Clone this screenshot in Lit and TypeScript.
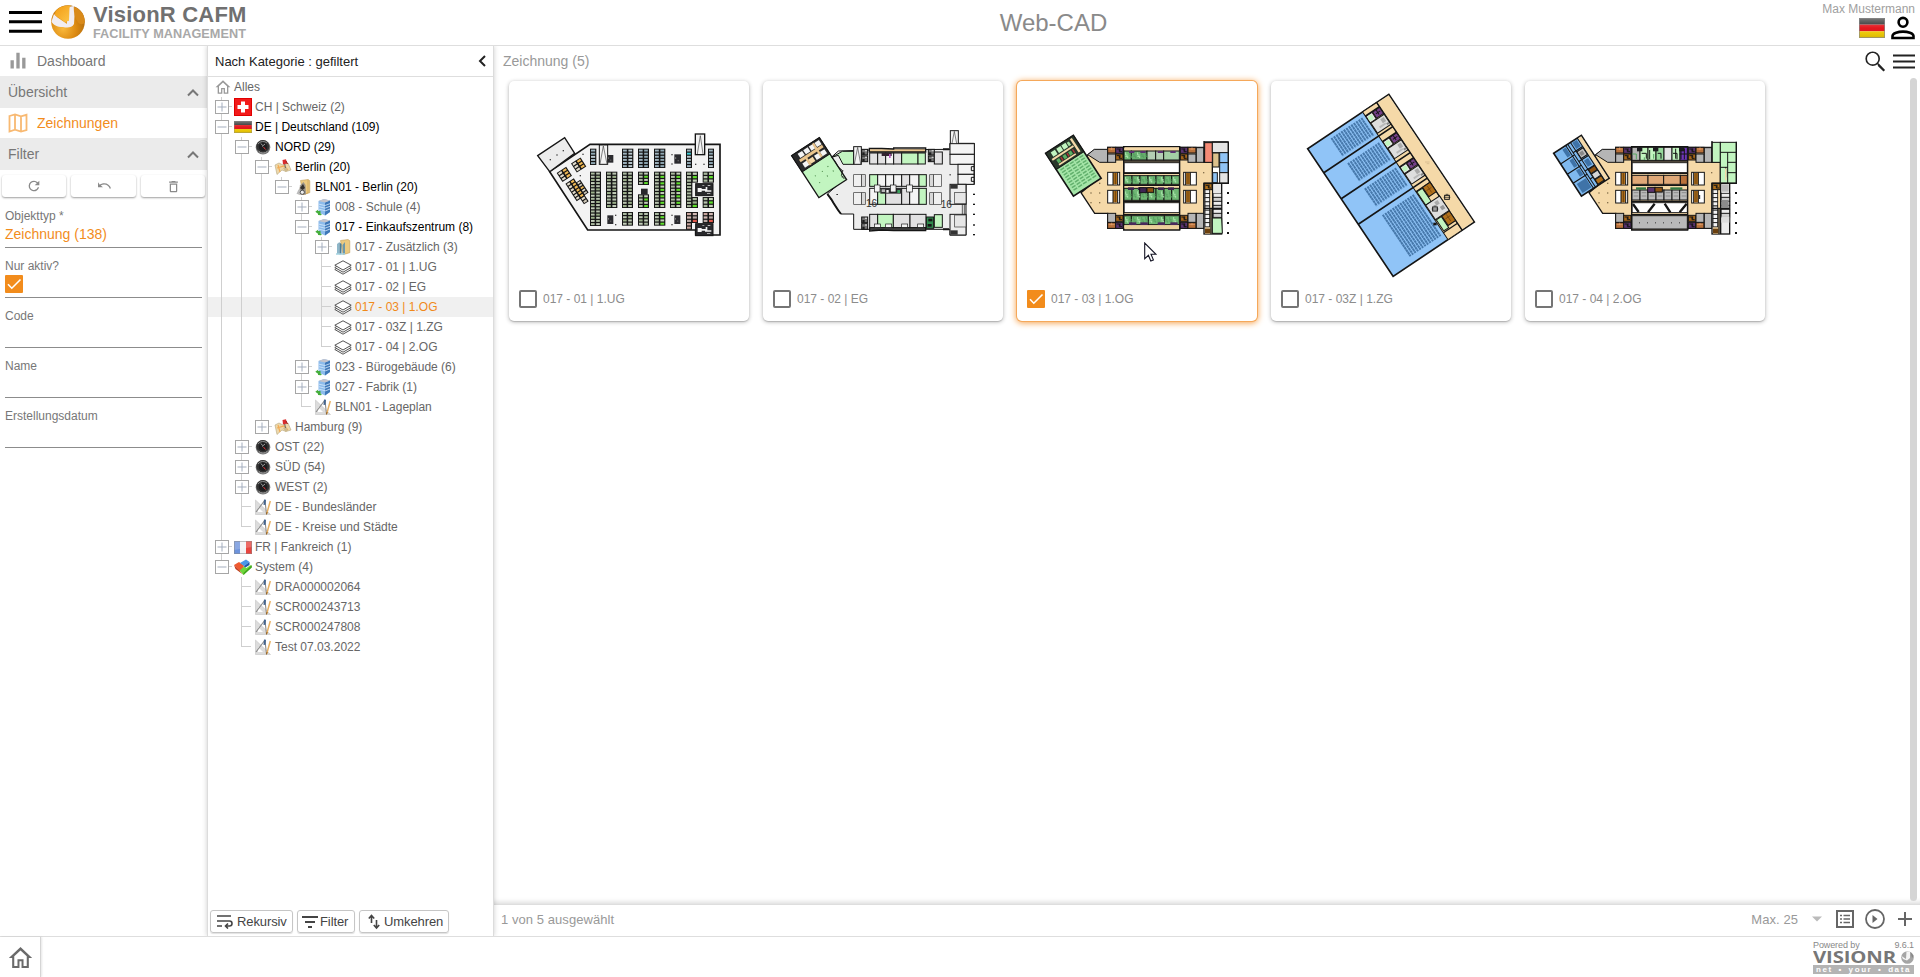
import { LitElement, html, svg, css, nothing } from "lit";
import { customElement, property } from "lit/decorators.js";

type Shape = unknown;

const BK = "#151515";
const TAN = "#f5d9a8";
const GREY = "#b5b5b5";
const GREEN = "#c2f5c0";

/* ---------- drawing helpers ---------- */
const box = (x: number, y: number, w: number, h: number, fill = "none", stroke = BK, sw = 3): Shape =>
  svg`<rect x=${x} y=${y} width=${w} height=${h} fill=${fill} stroke=${stroke} stroke-width=${sw}></rect>`;
const fillBox = (x: number, y: number, w: number, h: number, fill: string): Shape => box(x, y, w, h, fill, "none", 0);
const poly = (points: string, fill = "none", sw = 4): Shape =>
  svg`<polygon points=${points} fill=${fill} stroke=${BK} stroke-width=${sw}></polygon>`;
const path = (d: string, sw = 3, stroke = BK): Shape =>
  svg`<path d=${d} fill="none" stroke=${stroke} stroke-width=${sw}></path>`;
const range = (n: number): number[] => Array.from({ length: n }, (_, i) => i);

function stalls(x: number, y: number, w: number, h: number, colors: string[]): Shape {
  const cols = w > 24 ? 2 : 1;
  const rows = Math.max(2, Math.round(h / 9.5));
  const cw = w / cols;
  const rh = h / rows;
  return svg`${fillBox(x - 1, y - 1, w + 2, h + 2, BK)}
    ${range(rows * cols).map((i) => {
      const c = i % cols;
      const r = Math.floor(i / cols);
      return fillBox(x + c * cw + 2, y + r * rh + 1.8, cw - 4.5, rh - 3.6, colors[(i * 7 + r) % colors.length]);
    })}
    ${cols === 2 ? path(`M${x + w / 2} ${y}V${y + h}`, 2) : nothing}`;
}

function cells(x: number, y: number, widths: number[], h: number, fills: string[]): Shape {
  let cx = x;
  return widths.map((w, i) => {
    const s = box(cx, y, w, h, fills[i % fills.length]);
    cx += w;
    return s;
  });
}

const darkBlock = (x: number, y: number, w: number, h: number): Shape => svg`
  ${fillBox(x, y, w, h, "#2b2b2f")}${fillBox(x + w * 0.15, y + h * 0.3, w * 0.12, h * 0.2, "#999")}
  ${fillBox(x + w * 0.5, y + h * 0.6, w * 0.15, h * 0.15, "#777")}`;
const core = (x: number, y: number): Shape => svg`
  ${box(x, y, 52, 36, "#29292c")}
  <path d=${`M${x + 6} ${y + 13}h12v3h12v-6h5v10h12v4h-19v-3h-10v4h-12z`} fill="#f4f4f4"></path>
  ${fillBox(x + 20, y + 4, 6, 3, "#999")}${fillBox(x + 36, y + 4, 8, 3, "#bbb")}${fillBox(x + 34, y + 28, 10, 3, "#aaa")}`;
const dots = (): Shape => [369, 399, 429, 459, 489].map((y) => fillBox(660, y - 3, 6, 6, BK));

/* ---------- floor plans ---------- */
function planUG(): Shape {
  const g = ["#a9b99e", "#c4cfba", "#9bb08a", "#b9c4b0"];
  const g2 = [...g, "#5fe02c", "#a9b99e"];
  const b = ["#9fb4bf", "#bccbd2", "#8fa8b4"];
  const b2 = [...b, "#3fd0d8", "#bccbd2"];
  const o = ["#e3dccb", "#f0b955", "#cfc8b8"];
  const r = ["#c9a59d", "#e0574a", "#b9a9a4", "#d3bab4"];
  return svg`
    ${poly("270,223 660,223 660,495 587,495 587,480 263,480 149,305", "#f3f3f3", 5)}
    ${poly("113,257 194,203 224,250 149,305", "#ececec", 4)}
    ${[[151, 269], [171, 255], [190, 242], [249, 253], [241, 317], [587, 283], [612, 283], [516, 254], [516, 282], [347, 436], [347, 464], [516, 436], [516, 464]].map(([x, y]) => fillBox(x - 2, y - 2, 4, 4, "#444"))}
    ${stalls(271, 237, 17, 47, b)}${stalls(367, 237, 32, 56, b)}${stalls(415, 237, 31, 56, b2)}
    ${stalls(463, 237, 32, 56, b2)}${stalls(559, 237, 16, 56, b2)}${stalls(625, 237, 16, 56, b)}
    ${stalls(271, 306, 31, 161, g)}${stalls(319, 306, 32, 107, g)}${stalls(367, 306, 31, 107, g)}
    ${stalls(415, 306, 31, 38, g2)}${stalls(415, 374, 31, 39, g2)}${stalls(463, 306, 32, 107, g2)}
    ${stalls(511, 306, 32, 107, g2)}${stalls(559, 306, 34, 31, g2)}${stalls(559, 337, 17, 76, g)}
    ${stalls(576, 382, 17, 31, g2)}${stalls(609, 306, 32, 31, g2)}${stalls(609, 382, 32, 31, g2)}
    ${stalls(367, 427, 31, 39, g)}${stalls(415, 427, 31, 39, g)}${stalls(463, 427, 32, 39, g2)}
    ${stalls(559, 427, 34, 31, r)}${stalls(559, 458, 16, 20, r)}${stalls(609, 427, 32, 31, r)}
    <g transform="translate(193 313) rotate(-33)">${stalls(-16, -15, 32, 30, o)}</g>
    <g transform="translate(236 285) rotate(-33)">${stalls(-16, -15, 32, 30, o)}</g>
    <g transform="translate(214 343) rotate(-33)">${stalls(-13, -10, 28, 60, o)}${stalls(15, 4, 14, 44, o)}${stalls(0, 50, 15, 20, o)}</g>
    ${darkBlock(523, 253, 20, 28)}${darkBlock(322, 255, 18, 23)}${darkBlock(322, 436, 18, 26)}
    ${darkBlock(523, 436, 18, 26)}${fillBox(423, 356, 20, 18, "#29292c")}
    ${core(587, 341)}${core(587, 461)}
    ${box(586, 192, 28, 62, "#f3f3f3", BK, 4)}${path("M592 252L601 197L609 252", 2, "#444")}
    ${box(298, 225, 25, 58, "#f3f3f3")}${path("M300 282L310 228L321 282", 2, "#444")}`;
}

function planEG(): Shape {
  const w = "#f4f4f4";
  const l = "#e2e1e2";
  const small = (x: number, y: number): Shape => svg`
    ${box(x, y, 18, 17, "#777")}${fillBox(x + 2, y + 9, 7, 8, "#1e1e1e")}${fillBox(x + 10, y + 2, 6, 4, "#ccc")}`;
  return svg`
    ${poly("229,262 250,243 343,240 585,238 585,220 658,220 658,343 633,343 633,495 585,495 585,478 296,478 296,432 258,432 217,372 268,327", "#ededed", 3)}
    ${poly("230,262 262,244 296,244 296,283 264,283 250,256", GREEN, 3)}
    <g transform="translate(110 257) rotate(-33)">
      ${box(0, 0, 99, 150, GREEN, BK, 4)}${box(0, 0, 99, 58, "#29292a", BK, 3)}
      ${range(4).map((i) => fillBox(18 + i * 20, 5, 16, 15, w))}
      ${range(4).map((i) => fillBox(14 + i * 21, 37, 16, 15, i === 1 ? TAN : w))}
      ${fillBox(12, 22, 82, 9, "#eac58d")}${fillBox(70, 4, 7, 48, "#eac58d")}${fillBox(29, 28, 7, 26, "#eac58d")}
      ${[[25, 88], [50, 88], [72, 85], [25, 112], [55, 108], [78, 105]].map(([x, y]) => fillBox(x, y, 3, 3, "#3d7c3a"))}
    </g>
    ${path("M217 372L229 388L236 400L249 420L258 432", 6)}
    ${path("M229 262l10 10 10 18 14 12-4 14 9 11", 2.5)}
    ${box(296, 230, 23, 53, w)}${path("M298 282L308 232L317 282", 2, "#444")}
    ${box(586, 182, 24, 56, w)}${path("M588 236L598 184L608 236", 2, "#444")}
    ${cells(344, 249, [24, 24, 24, 24, 49, 22], 33, [l, l, w, l, GREEN, GREEN])}
    ${fillBox(344, 238, 168, 8, "#eac58d")}${path("M343 235H380L416 237V234H512V246H343Z", 4)}
    ${fillBox(380, 249, 30, 9, "#33232f")}${fillBox(402, 252, 5, 12, "#b75bc0")}
    ${cells(344, 314, [24, 24, 24, 24, 24, 28, 22], 35, [GREEN, w, w, w, l, w, GREEN])}
    ${cells(344, 355, [24, 24, 48, 24, 28, 22], 48, [w, GREEN, l, l, w, GREEN])}
    ${fillBox(376, 354, 64, 17, "#2f2f31")}${fillBox(380, 358, 10, 8, "#bbb")}${fillBox(394, 360, 7, 8, w)}${fillBox(410, 357, 8, 6, w)}${fillBox(427, 360, 8, 9, "#3aa05b")}
    ${[358, 406, 455].map((x) => box(x, 345, 17, 21, w, BK, 2))}
    ${cells(344, 433, [24, 47, 50, 48], 40, [l, GREEN, l, l])}
    ${path("M344 474H512V482H416L380 480L344 483Z", 4)}
    ${[358, 392, 440, 488].map((x) => box(x, 462, 18, 10, w, BK, 2))}
    ${small(320, 238)}${small(320, 258)}${small(520, 238)}${small(520, 258)}${small(320, 441)}${small(320, 461)}
    ${box(514, 441, 22, 34, "#2f8a4c")}${fillBox(520, 446, 12, 8, BK)}${fillBox(518, 462, 12, 8, BK)}
    ${box(538, 434, 24, 38, GREEN)}${box(538, 246, 24, 36, l)}
    ${[314, 368].map((y) => svg`${box(296, y, 24, 35, "#f0f0f0", "#333", 2)}${box(320, y, 11, 35, "#d8d8d8", "#333", 2)}${box(524, y, 12, 35, "#d8d8d8", "#333", 2)}${box(536, y, 23, 35, "#f0f0f0", "#333", 2)}`)}
    ${cells(585, 221, [73], 32, [w])}${cells(585, 253, [73], 30, [w])}
    ${box(609, 283, 48, 30, w)}${box(609, 313, 48, 30, w)}${path("M657 290h-8v12h8M657 322h-8v12h8")}
    ${box(585, 343, 48, 60, "#ededed")}${box(599, 367, 34, 34, "#e6e6e6", "#333", 2)}${fillBox(586, 344, 22, 12, "#333")}
    ${box(585, 433, 48, 62, "#ededed")}${box(599, 435, 34, 36, "#e6e6e6", "#333", 2)}${fillBox(586, 481, 22, 13, "#333")}
    ${path("M628 403v30M622 403v30", 2)}${path("M564 238h18M564 478h18", 6)}
    <text x="333" y="411" font-size="30" font-family="Liberation Sans, sans-serif" fill="#333">16</text>
    <text x="557" y="414" font-size="30" font-family="Liberation Sans, sans-serif" fill="#333">16</text>
    ${[373, 403, 433, 465, 494].map((y) => fillBox(654, y - 2, 6, 4, BK))}
    ${[[262, 302], [262, 320], [246, 373], [585, 314]].map(([x, y]) => fillBox(x - 2, y - 1, 5, 3, "#333"))}`;
}

/* Shell shared by both upper storeys. */
function upperShell(): Shape {
  const br = "#b9713a";
  const utility = (x: number, y: number, fill: string): Shape => svg`
    ${box(x, y, 22, 18, fill)}${path(`M${x + 3} ${y + 5}h8v8h8M${x + 13} ${y + 3}v8`, 3)}`;
  const wood = (x: number, y: number): Shape => svg`${box(x, y, 24, 17, br)}${path(`M${x + 3} ${y + 5}h18M${x + 12} ${y}v8`, 2, "#e8a672")}`;
  return svg`
    ${poly("238,258 262,240 302,240 302,232 350,232 350,230 518,230 518,232 591,232 591,277 616,277 616,340 591,340 591,475 518,475 518,480 350,480 350,475 302,475 302,430 263,430 222,368 278,322", TAN, 4)}
    ${poly("242,254 262,238 302,238 302,277 278,277", GREY, 3)}
    ${box(302, 252, 24, 25, GREY)}${wood(302, 232)}${utility(326, 232, "#5b3370")}${utility(326, 252, "#a5651a")}
    ${utility(520, 232, "#5b3370")}${utility(520, 252, "#a5651a")}${wood(543, 232)}
    ${box(543, 252, 24, 25, GREY)}${box(568, 233, 23, 44, GREY)}
    ${box(302, 430, 24, 27, GREY)}${wood(302, 458)}${utility(326, 436, "#a5651a")}${utility(326, 457, "#5b3370")}
    ${utility(520, 436, "#a5651a")}${utility(520, 457, "#5b3370")}${wood(543, 458)}
    ${box(543, 430, 24, 27, GREY)}${box(568, 430, 23, 45, GREY)}
    ${[307, 361].map((y) => svg`
      ${box(302, y, 36, 38, "#fff")}${fillBox(318, y + 2, 13, 34, "#b0701c")}${path(`M318 ${y}v38M332 ${y}v38`, 3)}${path(`M325 ${y + 2}v34`, 3, "#6e430d")}
      ${box(530, y, 38, 38, "#fff")}${fillBox(537, y + 2, 13, 34, "#b0701c")}${path(`M536 ${y}v38M550 ${y}v38`, 3)}${path(`M543 ${y + 2}v34`, 3, "#6e430d")}`)}
    ${box(351, 278, 166, 30, "#fff")}${box(351, 398, 166, 30, "#fff")}
    ${path("M350 230V480M518 230V480M350 273H518M350 310H518M350 346H518M350 394H518M350 434H518", 4)}
    ${[[252, 369], [278, 369], [252, 398], [278, 398], [278, 340], [590, 308]].map(([x, y]) => fillBox(x - 2, y - 2, 4, 4, "#85714d"))}
    ${box(591, 340, 53, 152, "#ececec", BK, 4)}${fillBox(594, 343, 22, 148, TAN)}
    ${range(9).map((i) => box(594, 358 + i * 12.5, 14, 12.5, "#f2f2f2", BK, 2.5))}
    ${utility(593, 341, "#b0701c")}${fillBox(594, 476, 16, 14, "#6b400e")}
    ${range(6).map((i) => box(618, 370 + i * 12, 26, 12, i % 2 ? "#cfcfcf" : "#ececec", BK, 2.5))}
    ${path("M617 340V492M591 415H644M612 415V492", 4)}
    ${dots()}`;
}

function planOG1(): Shape {
  const d = "#6fb874";
  const furn = (x: number, y: number, n: number, h: number): Shape =>
    range(n).map((i) => path(`M${x + 5 + i * 12} ${y + 4}v${h * 0.3}h6M${x + 4 + i * 12} ${y + h * 0.6}h7v5`, 2.6, i % 3 ? "#549d5e" : "#b5ecb6"));
  return svg`${upperShell()}
    ${cells(351, 243, [22, 47, 26, 24, 47], 27, [d, "#67ae6e", "#b4cfb4", "#b4cfb4", "#a4d0a5"])}${furn(351, 243, 6, 27)}
    ${cells(351, 317, [24, 24, 24, 24, 24, 23, 23], 26, [d])}${furn(351, 317, 13, 26)}
    ${cells(351, 355, [24, 24, 24, 24, 24, 23, 23], 36, [d])}${furn(351, 360, 13, 30)}
    ${cells(351, 437, [22, 51, 48, 45], 27, [d])}${furn(351, 437, 13, 27)}
    ${fillBox(352, 466, 164, 10, "#ecd09b")}${fillBox(352, 233, 164, 7, TAN)}
    ${[366, 400, 452, 490].map((x) => svg`${fillBox(x, 243, 16, 6, "#5b3370")}${fillBox(x, 457, 22, 8, "#4a2a5c")}`)}
    ${range(5).map((i) => fillBox(363 + i * 30, 352, 18, 8, "#3e2552"))}
    ${box(398, 353, 20, 15, "#3e2552")}${box(420, 353, 20, 14, "#8d5213")}
    ${box(593, 218, 23, 59, "#f58a75")}${box(616, 216, 48, 32, "#e4e4e4")}${box(617, 249, 19, 42, "#dcc18c")}
    ${box(638, 248, 26, 30, "#8fc3f5")}${box(638, 278, 26, 30, "#8fc3f5")}${box(617, 308, 14, 30, "#8fc3f5")}
    ${box(638, 308, 26, 31, "#e4e4e4")}${path("M591 213V278M664 215V340H591M591 216H664", 4)}
    ${fillBox(619, 343, 22, 27, "#e8e8e8")}${poly("616,444 644,444 646,490 616,490", GREEN, 3)}
    <g transform="translate(116 250) rotate(-33)">
      ${box(0, 0, 99, 153, "#a5e5a8", BK, 5)}${box(0, 0, 99, 58, "#29372a", BK, 3)}
      ${[14, 34, 52].map((x) => fillBox(x, 6, 15, 15, GREEN))}${fillBox(70, 8, 8, 12, "#a5e0a4")}
      ${fillBox(6, 24, 76, 6, TAN)}${fillBox(84, 4, 7, 48, TAN)}${fillBox(15, 48, 60, 5, TAN)}
      ${[16, 38, 58].map((x) => svg`${fillBox(x, 34, 10, 12, "#5ab062")}${fillBox(x + 14, 34, 4, 12, "#b3343a")}`)}
      ${range(5).map((c) => range(9).map((r) => fillBox(10 + c * 17, 64 + r * 9, 13, 4.5, "#62b06d")))}
    </g>`;
}

function planOG2(): Shape {
  return svg`${upperShell()}
    ${cells(351, 232, [24, 24, 24, 24, 24, 24, 22], 39, [GREY, GREEN, GREEN, "#97d99c", "#e4e4e4", GREEN, "#6e35b8"])}
    ${[366, 414, 492].map((x) => fillBox(x, 232, 16, 12, "#1c1c20"))}
    ${path("M380 250h14v16M404 240v28M428 250h10v16M474 250h12v18M482 236v30M498 240v28M508 236v32M494 252h22", 3)}
    ${path("M352 252h12v16M388 262v8M416 252v14", 3, "#58a864")}
    ${cells(351, 316, [48, 47, 50, 21], 27, ["#dfa878", "#dfa878", "#dfa878", "#b9713a"])}
    ${cells(351, 360, [24, 24, 24, 24, 24, 23, 23], 30, ["#bababa"])}
    ${range(7).map((i) => path(`M${356 + i * 24} 368h14M${356 + i * 24} 378h14`, 2, "#777"))}
    ${fillBox(363, 352, 30, 7, "#357a46")}${box(398, 352, 22, 15, "#5b3370")}${box(420, 352, 22, 14, "#8d5213")}${fillBox(466, 352, 36, 7, "#357a46")}
    ${path("M354 402L371 426M419 401L399 427M449 401L466 427M515 401L494 427", 7)}
    ${box(351, 437, 166, 40, "#b9b9b9")}${range(6).map((i) => fillBox(372 + i * 24, 457, 3, 3, "#333"))}
    ${path("M554 375v12", 3)}
    ${box(591, 217, 25, 60, GREEN)}${box(616, 217, 48, 122, GREEN)}${path("M616 247H664M638 247V339M638 277H664M638 308H664M616 292H638M632 292V322", 3)}
    ${fillBox(630, 295, 4, 36, TAN)}${path("M591 213V278M664 215V340H591", 4)}
    ${fillBox(619, 343, 22, 22, "#bbb")}${fillBox(619, 390, 22, 24, "#8b8b8b")}${fillBox(619, 440, 24, 18, "#ddd")}
    <g transform="translate(116 250) rotate(-33)">
      ${box(0, 0, 99, 153, "#7fb9ef", BK, 5)}
      ${fillBox(86, 2, 11, 149, TAN)}${path("M84 0V153M50 0V153M43 0V153M60 0V153", 3)}${path("M0 38H50M0 75H50M0 107H50M50 30H84M50 62H84M50 96H84M50 124H84", 3.5)}
      ${[[28, 5, 12, 28], [28, 44, 12, 26], [28, 80, 12, 22], [8, 115, 32, 32], [64, 4, 16, 22]].map(([x, y, w, h]) => fillBox(x, y, w, h, "#3f73a8"))}
      ${box(61, 34, 22, 24, "#c2c2c2")}${fillBox(65, 40, 12, 12, "#888")}${fillBox(64, 68, 15, 22, "#3f73a8")}
      ${box(61, 98, 22, 14, "#8d5213")}${box(61, 114, 22, 18, "#d5d5d5")}${box(61, 134, 22, 16, "#b0701c")}
    </g>`;
}

function planZG(): Shape {
  const seats = (y: number, h: number): Shape =>
    range(13).map((i) => svg`<path d=${`M${77 + i * 9} ${y}v${h}`} stroke="#4678ab" stroke-width="6" stroke-dasharray="8 1"></path>`);
  return svg`
    <g transform="translate(143 236) rotate(-33.8)">
      ${box(0, 0, 293, 461, "#90c4f7", BK, 5)}
      ${seats(13, 64)}${seats(103, 64)}${seats(194, 64)}${seats(290, 150)}
      ${box(198, 0, 51, 461, TAN, BK, 3)}${fillBox(250, 2, 41, 457, TAN)}${path("M249 0V461", 4)}
      ${path("M0 87H249M0 181H249M0 273H249", 5)}
      ${[0, 92, 184].map((y) => svg`
        ${path(`M198 ${y + 15}H249`, 4)}${box(200, y + 42, 48, 36, "#dedede")}
        ${fillBox(230, y + 48, 12, 14, "#aaa")}${fillBox(215, y + 64, 22, 6, "#b9b9b9")}${fillBox(238, y + 68, 8, 6, "#888")}
        ${box(199, y + 17, 22, 23, "#e8e8e8")}<circle cx="209" cy=${y + 28} r="8" fill=${GREEN}></circle>
        ${box(223, y + 17, 25, 22, "#76418a")}${path(`M228 ${y + 27}h16M235 ${y + 18}v16`, 3)}`)}
      ${path("M198 288H249", 4)}${box(200, 290, 20, 48, GREEN)}${box(222, 288, 27, 34, "#b0701c")}${path("M226 303h18M236 292v24", 2, "#6b400e")}
      ${box(200, 338, 50, 52, "#dedede")}${fillBox(226, 345, 12, 12, "#aaa")}${fillBox(232, 366, 12, 12, "#999")}
      ${box(202, 392, 18, 40, GREEN)}${box(222, 392, 27, 34, "#b0701c")}${path("M226 405h18M236 395v24", 2, "#6b400e")}${path("M198 436H249", 4)}
    </g>
    ${[[561, 382], [525, 417]].map(([x, y]) => svg`${box(x - 7, y - 6, 14, 12, "none", BK, 3)}${path(`M${x - 10} ${y}h20M${x - 4} ${y - 9}h8`, 2)}`)}
    ${fillBox(520, 458, 10, 8, BK)}${path("M495 276h14M500 281h8", 2, "#cdb488")}`;
}

/* ---------- small glyphs ---------- */
const FILLED: Record<string, string> = {
  refresh: "M17.65 6.35A7.958 7.958 0 0 0 12 4a8 8 0 1 0 7.73 10h-2.08A6 6 0 1 1 12 6c1.66 0 3.14.69 4.22 1.78L13 11h7V4z",
  undo: "M3 6.5V14h7.5L7.2 11.4C8.600 10.3 10.400 9.700 12.300 9.700c4 0 7.300 2.500 8.300 6.300l1.900-.6C21.200 11 17.200 7.900 12.300 7.900c-2.500 0-4.800.8-6.600 2.200z",
  trash: "M6 19c0 1.1.9 2 2 2h8c1.100 0 2-.9 2-2V7H6v12zM8 9h8v10H8V9zm7.500-5l-1-1h-5l-1 1H5v2h14V4z",
  search: "M15.100 14.100l-.6-.5A6.400 6.400 0 0 0 16 9.500 6.500 6.500 0 1 0 9.500 16c1.600 0 3-.6 4.100-1.500l.5.600v.9l5 4.900L20.500 19.500l-4.900-5zM9.500 14.500C6.700 14.500 4.500 12.300 4.500 9.500S6.700 4.500 9.500 4.500 14.500 6.700 14.500 9.500 12.300 14.500 9.500 14.500z",
  home: "M12 2L0.800 12.400H4V22h7v-6.500h2V22h7v-9.600h3.200zM18 20.200h-3.100v-6.600H9.100v6.600H6v-9.400l6-5.600 6 5.600z",
  bars: "M3 11h4v10H3zM10 2h4v19h-4zM17 8h4v13h-4z",
};

const glyph = (name: string, size: number) =>
  html`<svg width=${size} height=${size} viewBox="0 0 24 24" fill="currentColor"><path d=${FILLED[name]}></path></svg>`;

const lines = (d: string, w: number, h: number, sw = 2) =>
  html`<svg width=${w} height=${h} viewBox=${`0 0 ${w} ${h}`} fill="none" stroke="currentColor" stroke-width=${sw}><path d=${d}></path></svg>`;

const flag = (w: number, h: number) => html`
  <svg width=${w} height=${h} viewBox="0 0 18 12" preserveAspectRatio="none">
    <defs><linearGradient id="gl" x2="0" y2="1"><stop offset="0" stop-color="#fff" stop-opacity=".4"></stop><stop offset=".5" stop-color="#fff" stop-opacity=".05"></stop><stop offset="1" stop-color="#000" stop-opacity=".12"></stop></linearGradient></defs>
    <path d="M0 0h18v4H0z" fill="#222"></path><path d="M0 4h18v4H0z" fill="#e30b12"></path><path d="M0 8h18v4H0z" fill="#f5cf00"></path>
    <path d="M0 0h18v12H0z" fill="url(#gl)"></path><path d="M.25.25h17.500v11.500H.25z" fill="none" stroke="#888" stroke-width=".5"></path>
  </svg>`;

function treeIcon(kind: string) {
  switch (kind) {
    case "home":
      return html`<svg width="16" height="16" viewBox="0 0 24 24" fill="#999"><path d=${FILLED.home}></path></svg>`;
    case "ch":
      return html`<svg width="18" height="18" viewBox="0 0 18 18"><rect x=".5" y=".5" width="17" height="17" fill="#f21a1a" stroke="#e00000"></rect><path d="M7 3.500h4V7h3.500v4H11v3.500H7V11H3.500V7H7z" fill="#fff"></path></svg>`;
    case "de":
      return flag(18, 12);
    case "fr":
      return html`<svg width="18" height="13" viewBox="0 0 18 13"><path d="M0 0h6v13H0z" fill="#6d93dc"></path><path d="M6 0h6v13H6z" fill="#f3f3f5"></path><path d="M12 0h6v13h-6z" fill="#e8453f"></path><path d="M0 0h18v6L0 9z" fill="#fff" opacity=".2"></path><path d="M.5.5h17v12H.5z" fill="none" stroke="#888" stroke-opacity=".5"></path></svg>`;
    case "compass":
      return html`<svg width="16" height="16" viewBox="0 0 16 16"><circle cx="8" cy="8.300" r="7.300" fill="#777"></circle><circle cx="7.800" cy="7.600" r="6.500" fill="#333"></circle><circle cx="8" cy="7.800" r="4.300" fill="#1d1d1f"></circle><path d="M3 5a6 6 0 0 1 9-1" stroke="#888" fill="none"></path><path d="M7 7.500L10 5M6 4.500l1.500 2" stroke="#aaa" stroke-width=".9"></path><path d="M8.500 8l2 2.500" stroke="#d33" stroke-width="1"></path><path d="M3.500 12a6 6 0 0 0 9 0" stroke="#999" fill="none"></path></svg>`;
    case "map":
      return html`<svg width="18" height="16" viewBox="0 0 18 16"><path d="M1 6l4-2 4 2 5-2 3 7-5 1.500-4-1.500-5 4.500z" fill="#eed9ab" stroke="#b6a67e" stroke-width=".6"></path><path d="M4 6l2 7M3 9l7-2 4 4" stroke="#f2ab55" stroke-width="1.200" fill="none"></path><path d="M9 9l2.500 4 2.500-1.500-2-3.500z" fill="#cdbb90"></path><path d="M10.500 4l1 5" stroke="#666"></path><path d="M8.500 1l3.500-.8 1 4.300-4 1z" fill="#d92d2d"></path><path d="M12 2l1.500 3" stroke="#981515"></path></svg>`;
    case "site":
      return html`<svg width="16" height="16" viewBox="0 0 16 16"><path d="M5.500 1.500l7.500-1 1.800 1.200v12L8 15.700z" fill="#ecca80" stroke="#b8934a" stroke-width=".5"></path><path d="M13 .5v13.500L8 15.500" stroke="#cfa75c" stroke-width=".8" fill="none"></path><path d="M3.500 15.500L5 6.500 8.500 3l2 3 .5 9.500z" fill="#9b9489"></path><path d="M5 9l3-4 2 4-2.500 2z" fill="#33302e"></path><path d="M1.500 15l2-4.500 3 1v4z" fill="#bbb"></path><circle cx="7.300" cy="13.300" r="2.100" fill="#eee" stroke="#444" stroke-width=".9"></circle></svg>`;
    case "extra":
      return html`<svg width="16" height="16" viewBox="0 0 16 16"><path d="M5.500 1.500l7.500-1 1.800 1.200v12L8 15.700z" fill="#ecca80" stroke="#b8934a" stroke-width=".5"></path><path d="M2 15V5l2.500-2v12z" fill="#8fb7c9"></path><path d="M4.500 3.500L6.500 5v10l-2 .5z" fill="#4d7d96"></path><path d="M8 15L7.500 6 10 3v12z" fill="#6e98ab"></path><path d="M1 15h9" stroke="#a5d3e0" stroke-width="1.500"></path></svg>`;
    case "building":
      return html`<svg width="16" height="18" viewBox="0 0 16 18"><path d="M3.500 3L9 1l6 1.500V14l-5 3.500-6.500-3z" fill="#8dbcec"></path><path d="M10 4.500l5-2V14l-5 3.500z" fill="#3f78b8"></path><path d="M3.500 3L9 1l6 1.500-5 2z" fill="#c4c4cc"></path><path d="M4 6.200l6 1.300M4 8.700l6 1.500M4 11.200l6 1.500M10 7.500l5-1.800M10 10.200l5-1.900M10 13l5-2" stroke="#d6eafc" stroke-width=".8"></path><path d="M.3 13.800l2.700-2v1.300h2.500v2.300l1.300.8L6 17.300l-3-.3v-1.300z" fill="#46ad3c"></path></svg>`;
    case "layers":
      return html`<svg width="18" height="15" viewBox="0 0 18 15" fill="#fff" stroke="#555" stroke-width="1"><path d="M.8 9.500L9 5l8.200 4.500L9 14.200z"></path><path d="M.8 7.500L9 3l8.200 4.500L9 12.200z"></path><path d="M.8 5.200L9 .8l8.200 4.400L9 10z"></path></svg>`;
    case "drawing":
      return html`<svg width="16" height="16" viewBox="0 0 16 16"><path d="M.5 1v14.500h15z" fill="#dcdcdc" stroke="#c2c2c2" stroke-width=".6"></path><path d="M3 8v5h5z" fill="#fff"></path><path d="M10 1L1 13M10 2l1.500 13" stroke="#8b8b8b" stroke-width="1.100"></path><path d="M9 .5l2 .3-.5 5-2 .2z" fill="#43648e"></path><path d="M15.300 2l-3.500 12.500" stroke="#e8b060" stroke-width="1.500"></path><path d="M12 13l-.5 2.500" stroke="#8a5a20"></path></svg>`;
    default:
      return html`<svg width="18" height="16" viewBox="0 0 18 16"><path d="M0 6l5-3 5 3.500-1 4-3 2z" fill="#ee5a30"></path><path d="M0 6l5.500 5.500L9 15.500 1.500 10z" fill="#c23c20"></path><path d="M6 4L12 .5l3.500 2.500-5.500 4z" fill="#4a97e8"></path><path d="M10 7l5.500-4v3l-5 3z" fill="#1c59b0"></path><path d="M5.500 11.500l4.500-4 2.500 1.500 4-3 1.300 2-8.300 8z" fill="#6fd63c"></path><path d="M9.500 16v-2l8.300-8v2.500z" fill="#3fa51d"></path></svg>`;
  }
}

/* ---------- tree ---------- */
interface TreeRow {
  /** One character per column: "|" line, " " blank, "+"/"-" toggle, "p"/"m" last toggle, "T" tee, "L" corner. */
  cols: string;
  icon: string;
  label: string;
  strong?: boolean;
  active?: boolean;
}

const ROWS: TreeRow[] = [
  { cols: "", icon: "home", label: "Alles" },
  { cols: "+", icon: "ch", label: "CH | Schweiz (2)" },
  { cols: "-", icon: "de", label: "DE | Deutschland (109)", strong: true },
  { cols: "|-", icon: "compass", label: "NORD (29)", strong: true },
  { cols: "||-", icon: "map", label: "Berlin (20)", strong: true },
  { cols: "|||m", icon: "site", label: "BLN01 - Berlin (20)", strong: true },
  { cols: "||| +", icon: "building", label: "008 - Schule (4)" },
  { cols: "||| -", icon: "building", label: "017 - Einkaufszentrum (8)", strong: true },
  { cols: "||| |+", icon: "extra", label: "017 - Zusätzlich (3)" },
  { cols: "||| |T", icon: "layers", label: "017 - 01 | 1.UG" },
  { cols: "||| |T", icon: "layers", label: "017 - 02 | EG" },
  { cols: "||| |T", icon: "layers", label: "017 - 03 | 1.OG", active: true },
  { cols: "||| |T", icon: "layers", label: "017 - 03Z | 1.ZG" },
  { cols: "||| |L", icon: "layers", label: "017 - 04 | 2.OG" },
  { cols: "||| +", icon: "building", label: "023 - Bürogebäude (6)" },
  { cols: "||| +", icon: "building", label: "027 - Fabrik (1)" },
  { cols: "||| L", icon: "drawing", label: "BLN01 - Lageplan" },
  { cols: "||p", icon: "map", label: "Hamburg (9)" },
  { cols: "|+", icon: "compass", label: "OST (22)" },
  { cols: "|+", icon: "compass", label: "SÜD (54)" },
  { cols: "|+", icon: "compass", label: "WEST (2)" },
  { cols: "|T", icon: "drawing", label: "DE - Bundesländer" },
  { cols: "|L", icon: "drawing", label: "DE - Kreise und Städte" },
  { cols: "+", icon: "fr", label: "FR | Fankreich (1)" },
  { cols: "m", icon: "system", label: "System (4)" },
  { cols: " T", icon: "drawing", label: "DRA000002064" },
  { cols: " T", icon: "drawing", label: "SCR000243713" },
  { cols: " T", icon: "drawing", label: "SCR000247808" },
  { cols: " L", icon: "drawing", label: "Test 07.03.2022" },
];

@customElement("category-tree")
export class CategoryTree extends LitElement {
  static styles = css`
    :host { display: block; font: 12px "Liberation Sans", Arial, sans-serif; color: #666; }
    .row { display: flex; height: 20px; align-items: center; padding-left: 4px; white-space: pre; }
    .cell { width: 20px; height: 20px; flex: none; display: block; }
    .icon { width: 18px; height: 18px; margin: 0 3px 0 2px; display: flex; align-items: center; justify-content: center; flex: none; }
    .icon svg { flex: none; display: block; }
    .strong { color: #000; }
    .active { background: #f0f0f0; color: #f0891a; }
    .root .icon { margin-left: 2px; margin-right: 2px; }
  `;

  private cell(c: string) {
    const toggle = "+-mp".includes(c);
    const last = c === "m" || c === "p";
    return html`<svg class="cell" viewBox="0 0 20 20" fill="none" stroke="#cfcfcf" stroke-width="1">
      ${"|T+-".includes(c) ? svg`<path d="M9.5 0V20"></path>` : nothing}
      ${c === "L" || last ? svg`<path d="M9.5 0V10"></path>` : nothing}
      ${c === "T" || c === "L" ? svg`<path d="M9.5 9.5H19"></path>` : nothing}
      ${toggle
        ? svg`<path d="M16 9.500H21"></path><rect x="3.500" y="3.500" width="13" height="13" fill="#fff" stroke="#a6a6a6"></rect>
            <path d="M5.500 10H14.500" stroke="#a3adbd"></path>${c === "+" || c === "p" ? svg`<path d="M10 5.500V14.500" stroke="#a3adbd"></path>` : nothing}`
        : nothing}
    </svg>`;
  }

  render() {
    return ROWS.map(
      (r) => html`<div class="row ${r.cols ? "" : "root"} ${r.strong ? "strong" : ""} ${r.active ? "active" : ""}">${[...r.cols].map((c) => this.cell(c))}<span class="icon">${treeIcon(r.icon)}</span><span>${r.label}</span></div>`
    );
  }
}

/* ---------- checkbox ---------- */
@customElement("check-box")
export class CheckBox extends LitElement {
  @property({ type: Boolean, reflect: true }) checked = false;
  static styles = css`
    :host { display: block; box-sizing: border-box; width: 18px; height: 18px; border: 2px solid #757575; border-radius: 2px; flex: none; }
    :host([checked]) { border: 0; background: #f28c1c; border-radius: 1px; }
    svg { display: block; }
  `;
  render() {
    return this.checked
      ? html`<svg width="18" height="18" viewBox="0 0 18 18" fill="none" stroke="#fff" stroke-width="1.600"><path d="M3 9.300l3.800 3.900L15.500 4.500"></path></svg>`
      : nothing;
  }
}

/* ---------- card ---------- */
@customElement("drawing-card")
export class DrawingCard extends LitElement {
  @property() label = "";
  @property() frame = "0 0 720 600";
  @property({ type: Boolean, reflect: true }) selected = false;
  @property({ attribute: false }) plan: () => Shape = () => nothing;
  static styles = css`
    :host { display: flex; flex-direction: column; width: 240px; height: 240px; border-radius: 5px; background: #fff; box-shadow: 0 1px 4px rgba(0, 0, 0, 0.3), 0 1px 1px rgba(0, 0, 0, 0.14); font: 12px "Liberation Sans", Arial, sans-serif; color: #8c8c8c; }
    :host([selected]) { box-shadow: 0 0 0 1px #f5a85a, 0 1px 6px 1px #f5a04a; }
    .plan { display: block; width: 240px; height: 200px; }
    .foot { display: flex; align-items: center; gap: 6px; padding: 9px 10px 0; height: 18px; }
  `;
  render() {
    return html`<svg class="plan" viewBox=${this.frame}>${this.plan()}</svg>
      <div class="foot"><check-box ?checked=${this.selected}></check-box><span>${this.label}</span></div>`;
  }
}

const CARDS = [
  { label: "017 - 01 | 1.UG", frame: "27 33 720 600", plan: planUG, selected: false },
  { label: "017 - 02 | EG", frame: "24 33 720 600", plan: planEG, selected: false },
  { label: "017 - 03 | 1.OG", frame: "30 33 720 600", plan: planOG1, selected: true },
  { label: "017 - 03Z | 1.ZG", frame: "33 33 720 600", plan: planZG, selected: false },
  { label: "017 - 04 | 2.OG", frame: "30 33 720 600", plan: planOG2, selected: false },
];

/* ---------- page ---------- */
@customElement("app-root")
export class AppRoot extends LitElement {
  static styles = css`
    :host { display: grid; grid-template-rows: 45px 1fr 40px; height: 977px; width: 1920px; background: #fff; overflow: hidden; position: relative; font: 14px "Liberation Sans", Arial, sans-serif; color: #777; gap: 1px; }
    svg { display: block; flex: none; }
    .top { display: grid; grid-template-columns: 247px 1fr 60px; box-shadow: 0 1px 0 #dedede; white-space: nowrap; }
    .brand { display: flex; align-items: flex-start; }
    .burger { color: #000; padding: 11px 9px 0; }
    .orb { padding-top: 5px; }
    .name { padding-left: 8px; display: flex; flex-direction: column; font-weight: bold; }
    .name b { font-size: 22px; line-height: 24px; padding-top: 3px; color: #707070; letter-spacing: 0.2px; }
    .name span { font-size: 12.700px; line-height: 14px; color: #a8a8a8; letter-spacing: 0.05px; }
    .title { font-size: 24px; line-height: 45px; color: #8a8a8a; text-align: center; }
    .user { display: flex; flex-direction: column; align-items: flex-end; padding-right: 5px; font-size: 12px; line-height: 14px; color: #a0a0a0; padding-top: 2px; }
    .user div { display: flex; gap: 6px; align-items: center; color: #000; }
    .mid { display: grid; grid-template-columns: 207px 287px 1fr; min-height: 0; }
    .side { display: flex; flex-direction: column; }
    .nav { display: flex; align-items: center; height: 30px; padding-left: 8px; gap: 9px; }
    .nav svg { color: #999; }
    .nav.on { color: #f28c1c; }
    .nav.on svg { color: #f8b972; }
    .group { display: flex; align-items: center; justify-content: space-between; height: 32px; background: #ebebeb; padding: 0 8px; }
    .tools { display: grid; grid-template-columns: 64px 65px 64px; gap: 5px; padding: 5px 2px 1px; }
    .tools div { height: 22px; display: flex; align-items: center; justify-content: center; border-radius: 3px; color: #8a8a8a; box-shadow: 0 1px 2px rgba(0, 0, 0, 0.38); }
    .field { height: 49px; border-bottom: 1px solid #8c8c8c; margin: 0 5px; font-size: 12px; line-height: 14px; }
    .field p { margin: 0; padding-top: 11px; }
    .field p + div { color: #f28c1c; font-size: 14px; line-height: 16px; padding-top: 3px; }
    .field check-box { margin-top: 2px; }
    .treepane { display: flex; flex-direction: column; border-left: 1px solid #dcdcdc; border-right: 1px solid #dcdcdc; box-shadow: 0 0 5px rgba(0, 0, 0, 0.2); clip-path: inset(0 -8px 0 -8px); background: #fff; }
    .treehead { display: flex; align-items: center; justify-content: space-between; height: 30px; border-bottom: 1px solid #dedede; padding: 0 7px 0 7px; color: #222; font-size: 13px; }
    category-tree { flex: 1; }
    .actions { display: flex; gap: 4px; padding: 0 0 3px 2px; font-size: 13px; color: #444; letter-spacing: -0.1px; }
    .actions div { box-sizing: border-box; height: 23px; border: 1px solid #c6c6c6; border-radius: 3px; display: flex; align-items: center; box-shadow: 0 1px 1px rgba(0, 0, 0, 0.12); white-space: nowrap; }
    .recursive { width: 83px; padding-left: 6px; gap: 4px; }
    .filter { width: 58px; padding-left: 4px; gap: 2px; }
    .reverse { width: 90px; padding-left: 8px; gap: 4px; }
    .main { display: flex; flex-direction: column; min-width: 0; }
    .mainhead { display: flex; align-items: center; height: 30px; padding: 0 5px 0 9px; color: #999; gap: 4px; }
    .mainhead span { flex: 1; }
    .mainhead svg { color: #222; }
    .body { display: flex; justify-content: space-between; flex: 1; box-shadow: inset 0 -6px 5px -4px rgba(0, 0, 0, 0.14); padding-right: 3px; }
    .cards { display: flex; gap: 14px; padding: 5px 0 0 15px; }
    .bar { width: 7px; border-radius: 4px; background: #d5d5d5; margin: 2px 0 3px; }
    .status { display: flex; align-items: center; height: 28px; border-top: 1px solid #dedede; font-size: 13px; color: #999; padding: 0 7px 3px 7px; letter-spacing: 0.06px; }
    .status span:first-child { flex: 1; }
    .status svg { color: #666; }
    .status svg:last-child { margin-left: 1px; }
    .foot { display: flex; justify-content: space-between; box-shadow: 0 -1px 0 #dedede; }
    .homebtn { width: 40px; border-right: 1px solid #d5d5d5; display: flex; align-items: center; justify-content: center; color: #6a6a6a; box-shadow: 1px 0 2px rgba(0, 0, 0, 0.1); }
    .power { width: 101px; padding: 3px 6px 0 0; font-size: 9px; line-height: 10px; color: #888; letter-spacing: -0.1px; }
    .power div { display: flex; justify-content: space-between; align-items: center; }
    .power .strip { background: #b4b4b4; color: #fff; font-weight: bold; font-size: 8px; height: 9px; line-height: 9px; letter-spacing: 1.600px; padding: 0 3px; margin-top: 1px; white-space: nowrap; }
    .cursor { position: absolute; left: 1144px; top: 242px; }
  `;

  private field(label: string, content: unknown = nothing) {
    return html`<div class="field"><p>${label}</p>${content}</div>`;
  }

  render() {
    const chevron = lines("M1 7.500L6 2.500L11 7.500", 12, 9, 2);
    return html`
      <header class="top">
        <div class="brand">
          <div class="burger">${lines("M0 1.500H33M0 10.800H33M0 20.200H33", 33, 22, 3)}</div>
          <svg class="orb" width="34" height="34" viewBox="0 0 34 34">
            <defs><radialGradient id="o" cx=".35" cy=".7" r=".8"><stop offset="0" stop-color="#f9b93c"></stop><stop offset=".5" stop-color="#dc8a12"></stop><stop offset="1" stop-color="#a3620c"></stop></radialGradient>
            <linearGradient id="o2" x2="1" y2="1"><stop offset="0" stop-color="#f29a12"></stop><stop offset="1" stop-color="#fdc649"></stop></linearGradient></defs>
            <circle cx="17" cy="17" r="16.800" fill="url(#o)"></circle>
            <path d="M.5 16.500L3 9l3.500 3.500L16 19V2l7-1 1 2-1 16c-2 4-7 4-11 3C6 22 2 20 .5 16.500z" fill="#f1edf1"></path>
            <path d="M4.500 6.500C8 1 15 0 20 .5l-1.500 2.200-.5 13L14 17 3.800 10z" fill="url(#o2)"></path>
            <path d="M22.500 1.500C30 4 34 10 33.700 17c-1 3-5 3-7 0-3-4-4-9-4-15.500z" fill="#d98a1a"></path>
          </svg>
          <div class="name"><b>VisionR CAFM</b><span>FACILITY MANAGEMENT</span></div>
        </div>
        <div class="title">Web-CAD</div>
        <div class="user">Max Mustermann
          <div>${flag(26, 20)}
            <svg width="24" height="24" viewBox="0 0 24 24" fill="none" stroke="#000" stroke-width="2.600"><circle cx="12" cy="6.300" r="4.400"></circle><path d="M1.500 22v-2c0-3 6-4.400 10.500-4.400S22.500 17 22.500 20v2z"></path></svg>
          </div>
        </div>
      </header>
      <section class="mid">
        <aside class="side">
          <div class="nav">${glyph("bars", 20)}<span>Dashboard</span></div>
          <div class="group"><span>Übersicht</span>${chevron}</div>
          <div class="nav on">
            <svg width="20" height="20" viewBox="0 0 20 20" fill="none" stroke="currentColor" stroke-width="1.800"><path d="M1.500 3L7 1.500l6 1.800 5.500-1.500V17L13 18.500l-6-1.800-5.500 1.800zM7 1.500v15.200M13 3.300v15.200"></path></svg>
            <span>Zeichnungen</span>
          </div>
          <div class="group"><span>Filter</span>${chevron}</div>
          <div class="tools"><div>${glyph("refresh", 16)}</div><div>${glyph("undo", 16)}</div><div>${glyph("trash", 15)}</div></div>
          ${this.field("Objekttyp *", html`<div>Zeichnung (138)</div>`)}
          ${this.field("Nur aktiv?", html`<check-box checked></check-box>`)}
          ${this.field("Code")}${this.field("Name")}${this.field("Erstellungsdatum")}
        </aside>
        <nav class="treepane">
          <div class="treehead"><span>Nach Kategorie : gefiltert</span>${lines("M7 1L2 6L7 11", 8, 12, 2)}</div>
          <category-tree></category-tree>
          <div class="actions">
            <div class="recursive">${lines("M0 2H14M0 7H12.500a2.300 2.300 0 0 1 0 5H9M0 12H5M11 9.500L8.500 12L11 14.500", 16, 15, 1.6)}Rekursiv</div>
            <div class="filter">${lines("M0 2H16M3 7H13M6 12H10", 16, 14, 1.8)}Filter</div>
            <div class="reverse">${lines("M3.500 9V2M.800 4.500L3.500 1.500L6.200 4.500M8.500 6V13.500M5.800 11L8.500 14L11.200 11", 12, 16, 1.6)}Umkehren</div>
          </div>
        </nav>
        <main class="main">
          <div class="mainhead"><span>Zeichnung (5)</span>${glyph("search", 27)}${lines("M0 1.500H22M0 7.500H22M0 13.500H22", 22, 15, 2)}</div>
          <div class="body">
            <div class="cards">
              ${CARDS.map((c) => html`<drawing-card .label=${c.label} .frame=${c.frame} .plan=${c.plan} ?selected=${c.selected}></drawing-card>`)}
            </div>
            <div class="bar"></div>
          </div>
          <div class="status">
            <span>1 von 5 ausgewählt</span><span>Max. 25</span>
            <svg width="38" height="6" viewBox="0 0 38 6"><path d="M14 .5h10L19 5.500z" fill="#bbb"></path></svg>
            <svg width="18" height="18" viewBox="0 0 18 18" fill="none" stroke="currentColor" stroke-width="2"><path d="M1 1h16v16H1z"></path><path d="M4 5.500h2M7.500 5.500h6.500M4 9h2M7.500 9h6.500M4 12.500h2M7.500 12.500h6.500" stroke-width="1.600"></path></svg>
            <svg width="42" height="20" viewBox="0 0 42 20" fill="none" stroke="currentColor" stroke-width="1.800"><circle cx="21" cy="10" r="9"></circle><path d="M18.500 6v8l5-4z" fill="#666" stroke="none"></path></svg>
            ${lines("M8 1V15M1 8H15", 16, 16, 2)}
          </div>
        </main>
      </section>
      <footer class="foot">
        <div class="homebtn">${glyph("home", 25)}</div>
        <div class="power">
          <div><span>Powered by</span><span>9.6.1</span></div>
          <div>
            <svg width="84" height="14" viewBox="0 0 84 14"><text x="0" y="13" textLength="83" lengthAdjust="spacingAndGlyphs" font-family="Open Sans, sans-serif" font-weight="700" font-size="16" fill="#777">VISIONR</text></svg>
            <svg width="13" height="13" viewBox="0 0 13 13"><circle cx="6.500" cy="6.500" r="6.300" fill="#a5a5a5"></circle><path d="M.5 5L5 8 5.500.5H9L9 7 6 9.500 2 8z" fill="#f4f4f4"></path><path d="M9.500 1L12.700 5 11 7z" fill="#888"></path></svg>
          </div>
          <div class="strip"><span>net</span><span>•</span><span>your</span><span>•</span><span>data</span></div>
        </div>
      </footer>
      <svg class="cursor" width="13" height="21" viewBox="0 0 13 21"><path d="M.7 1v15.800l3.700-3.500 2.400 5.700 2.600-1.100L7 12.300h5z" fill="#fff" stroke="#151525" stroke-width="1.100"></path></svg>
    `;
  }
}
